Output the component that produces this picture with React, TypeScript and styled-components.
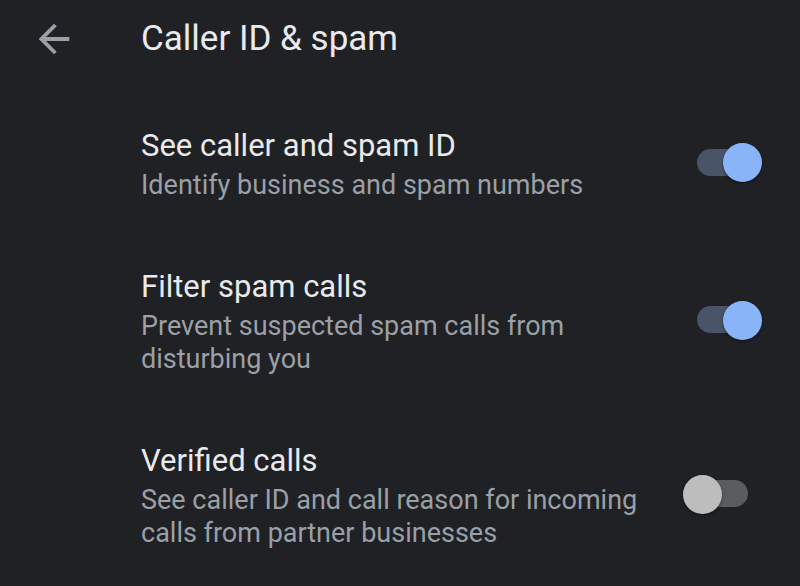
import React from "react";
import styled, { createGlobalStyle } from "styled-components";

const Global = createGlobalStyle`
  html, body { margin: 0; padding: 0; background: #202124; }
  body { font-family: Roboto, "Noto Sans", Arial, sans-serif; -webkit-font-smoothing: antialiased; }
`;

const Screen = styled.div`
  width: 800px;
  height: 586px;
  background: #202124;
  overflow: hidden;
`;

const Header = styled.header`
  height: 78px;
  display: flex;
  align-items: center;
  padding-left: 31px;
  gap: 64px;
`;

const BackIcon = styled.svg`
  width: 46px;
  height: 46px;
  flex: none;
  fill: #9aa0a6;
`;

const Title = styled.h1`
  margin: 0;
  font-family: Roboto, sans-serif;
  font-weight: 400;
  font-size: 35px;
  line-height: 44px;
  color: #e8eaed;
`;

const List = styled.div`
  padding-top: 17px;
`;

const Row = styled.div`
  display: flex;
  align-items: center;
  padding: 32px 38px 34px 141px;
  gap: 24px;
`;

const Texts = styled.div`
  flex: 1;
  display: flex;
  flex-direction: column;
  gap: 4px;
`;

const ItemTitle = styled.div`
  font-size: 31px;
  line-height: 38px;
  color: #e8eaed;
`;

const ItemSub = styled.div`
  font-size: 27px;
  line-height: 33px;
  color: #9aa0a6;
  max-width: 520px;
`;

const SwitchBox = styled.div`
  position: relative;
  width: 79px;
  height: 40px;
  flex: none;
  display: flex;
  align-items: center;
  margin-bottom: 5px;
`;

const Track = styled.div<{ $on: boolean }>`
  width: 63px;
  height: 27px;
  border-radius: 14px;
  margin-left: ${(p) => (p.$on ? "14px" : "2px")};
  background: ${(p) => (p.$on ? "#4a5468" : "#5b5c5f")};
`;

const Thumb = styled.div<{ $on: boolean }>`
  position: absolute;
  top: 1px;
  left: ${(p) => (p.$on ? "40px" : "0px")};
  width: 39px;
  height: 39px;
  border-radius: 50%;
  background: ${(p) => (p.$on ? "#8ab4f8" : "#bdbdbd")};
  box-shadow: 0 1px 3px rgba(0, 0, 0, 0.45);
`;

const Switch = ({ on }: { on: boolean }) => (
  <SwitchBox>
    <Track $on={on} />
    <Thumb $on={on} />
  </SwitchBox>
);

const items = [
  { title: "See caller and spam ID", sub: "Identify business and spam numbers", on: true },
  { title: "Filter spam calls", sub: "Prevent suspected spam calls from disturbing you", on: true },
  {
    title: "Verified calls",
    sub: "See caller ID and call reason for incoming calls from partner businesses",
    on: false,
  },
];

export default function App() {
  return (
    <Screen>
      <Global />
      <Header>
        <BackIcon viewBox="0 0 24 24">
          <path d="M20 11H7.83l5.59-5.59L12 4l-8 8 8 8 1.41-1.41L7.83 13H20v-2z" />
        </BackIcon>
        <Title>Caller ID &amp; spam</Title>
      </Header>
      <List>
        {items.map((it) => (
          <Row key={it.title}>
            <Texts>
              <ItemTitle>{it.title}</ItemTitle>
              <ItemSub>{it.sub}</ItemSub>
            </Texts>
            <Switch on={it.on} />
          </Row>
        ))}
      </List>
    </Screen>
  );
}
